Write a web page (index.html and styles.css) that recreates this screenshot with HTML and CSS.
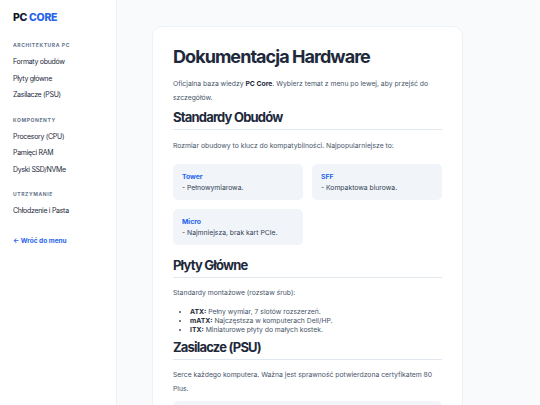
FILE: index.html
```html
<!DOCTYPE html>
<html lang="pl">
<head>
<meta charset="utf-8">
<title>PC Core</title>
<link rel="stylesheet" href="styles.css">
</head>
<body>
<div class="layout">
  <aside class="sidebar">
    <div class="logo">PC <span class="logo-accent">CORE</span></div>
    <div class="nav-title">Architektura PC</div>
    <a class="nav-link" href="#">Formaty obudów</a>
    <a class="nav-link" href="#">Płyty główne</a>
    <a class="nav-link" href="#">Zasilacze (PSU)</a>
    <div class="nav-title">Komponenty</div>
    <a class="nav-link" href="#">Procesory (CPU)</a>
    <a class="nav-link" href="#">Pamięci RAM</a>
    <a class="nav-link" href="#">Dyski SSD/NVMe</a>
    <div class="nav-title">Utrzymanie</div>
    <a class="nav-link" href="#">Chłodzenie i Pasta</a>
    <a class="back-link" href="#">← Wróć do menu</a>
  </aside>
  <main class="main">
    <article class="card">
      <h1 class="title">Dokumentacja Hardware</h1>
      <p class="text">Oficjalna baza wiedzy <strong>PC Core</strong>. Wybierz temat z menu po lewej, aby przejść do szczegółów.</p>

      <h2 class="section">Standardy Obudów</h2>
      <p class="text">Rozmiar obudowy to klucz do kompatybilności. Najpopularniejsze to:</p>
      <div class="grid">
        <div class="box"><div class="box-title">Tower</div><div class="box-text">- Pełnowymiarowa.</div></div>
        <div class="box"><div class="box-title">SFF</div><div class="box-text">- Kompaktowa biurowa.</div></div>
        <div class="box"><div class="box-title">Micro</div><div class="box-text">- Najmniejsza, brak kart PCIe.</div></div>
      </div>

      <h2 class="section">Płyty Główne</h2>
      <p class="text">Standardy montażowe (rozstaw śrub):</p>
      <ul class="list">
        <li><strong>ATX:</strong> Pełny wymiar, 7 slotów rozszerzeń.</li>
        <li><strong>mATX:</strong> Najczęstsza w komputerach Dell/HP.</li>
        <li><strong>ITX:</strong> Miniaturowe płyty do małych kostek.</li>
      </ul>

      <h2 class="section">Zasilacze (PSU)</h2>
      <p class="text">Serce każdego komputera. Ważna jest sprawność potwierdzona certyfikatem 80 Plus.</p>
      <div class="box box-wide"><div class="box-title">80 Plus Gold</div><div class="box-text">- Sprawność powyżej 87%.</div></div>
    </article>
  </main>
</div>
</body>
</html>
```

FILE: styles.css
```css
* { box-sizing: border-box; }
html, body { margin: 0; padding: 0; height: 100%; overflow: hidden; }
body {
  font-family: Inter, "Noto Sans", "Liberation Sans", sans-serif;
  background: #f8fafc;
  color: #1e293b;
}
.layout { display: flex; height: 100%; }
.sidebar {
  width: 117px;
  flex: none;
  background: #ffffff;
  border-right: 1px solid #eef1f5;
  padding: 12px 13px;
  display: flex;
  flex-direction: column;
  align-items: flex-start;
}
.logo {
  font-size: 10.5px;
  line-height: 12px;
  font-weight: 800;
  color: #0f172a;
  letter-spacing: -0.3px;
  margin-bottom: 17px;
}
.logo-accent { color: #2563eb; }
.nav-title {
  font-size: 5px;
  line-height: 8px;
  font-weight: 700;
  letter-spacing: 0.6px;
  text-transform: uppercase;
  color: #64748b;
  margin-bottom: 5px;
}
.nav-link {
  display: block;
  font-size: 7px;
  letter-spacing: -0.3px;
  color: #1e293b;
  text-decoration: none;
  line-height: 16.5px;
}
.nav-link + .nav-title { margin-top: 12px; }
.back-link {
  display: block;
  margin-top: 17px;
  font-size: 6.5px;
  line-height: 8px;
  font-weight: 700;
  color: #2563eb;
  text-decoration: none;
}
.main {
  flex: 1;
  padding: 26px 35px 0;
}
.card {
  width: 311px;
  background: #ffffff;
  border: 1px solid #eef1f5;
  border-radius: 10px;
  padding: 19px 20px 20px;
  min-height: 400px;
}
.title {
  font-size: 18px;
  line-height: 22px;
  font-weight: 700;
  letter-spacing: -0.95px;
  margin: 0 0 9px;
  color: #1e293b;
}
.text {
  font-size: 6.8px;
  line-height: 14px;
  color: #475569;
  margin: 0 0 5px;
}
.text strong { color: #1e293b; }
.section {
  font-size: 13px;
  line-height: 15px;
  font-weight: 700;
  letter-spacing: -0.8px;
  color: #1e293b;
  margin: 0 0 8.5px;
  padding-bottom: 4px;
  border-bottom: 1px solid #e2e8f0;
}
.grid {
  display: grid;
  grid-template-columns: 1fr 1fr;
  gap: 9px;
  margin: 11px 0 13px;
}
.box {
  background: #f1f5f9;
  border-radius: 5px;
  padding: 8px 9px;
  height: 36px;
}
.box-title {
  font-size: 6.8px;
  font-weight: 700;
  color: #2563eb;
  line-height: 10px;
}
.box-text {
  font-size: 6.8px;
  color: #334155;
  line-height: 11px;
}
.list {
  margin: 6.5px 0 6px;
  padding-left: 17px;
  font-size: 6.8px;
  line-height: 9px;
  color: #475569;
}
.list strong { color: #1e293b; }
.box-wide { margin-top: 4px; }
```
